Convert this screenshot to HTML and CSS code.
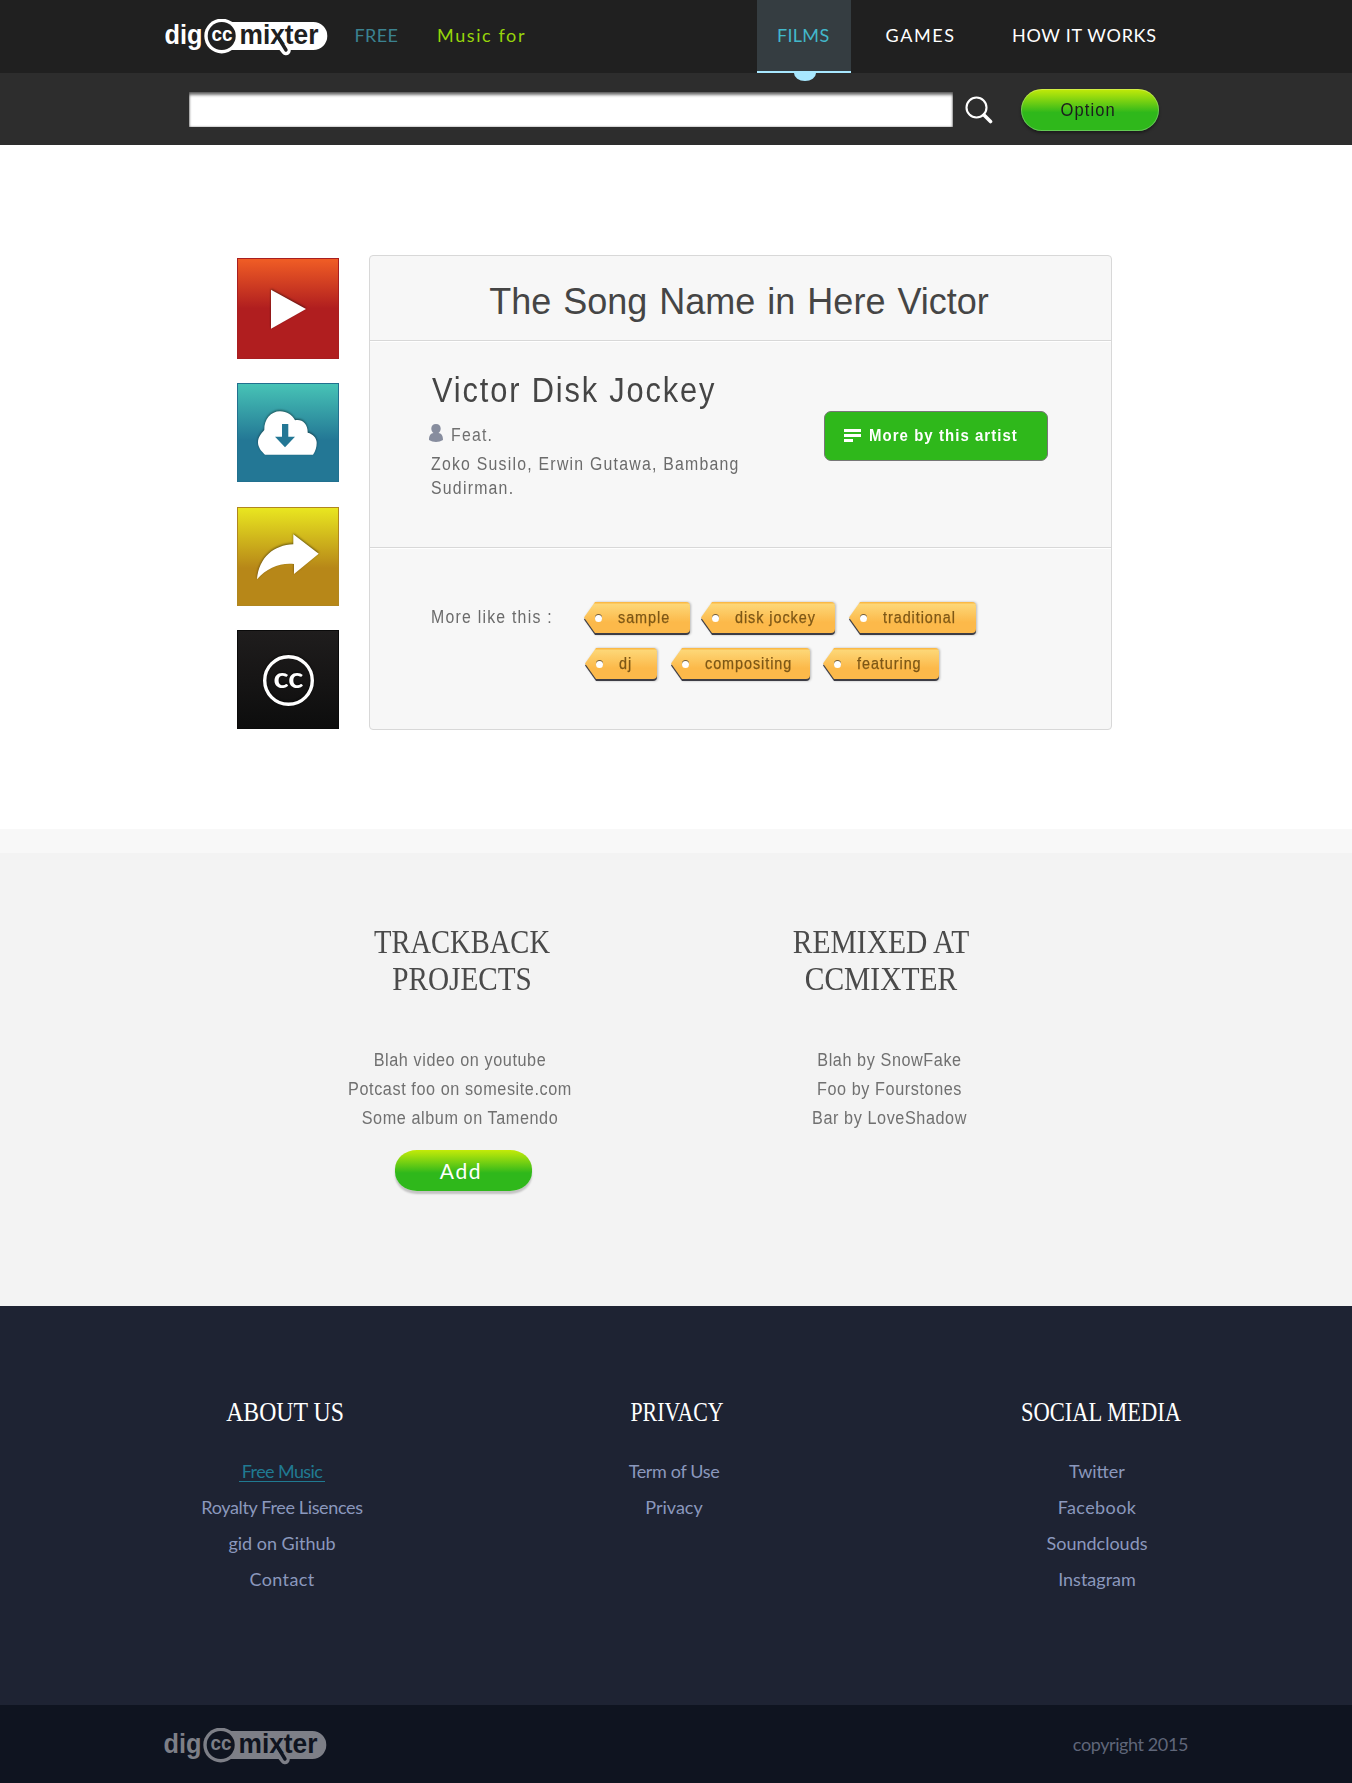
FILE: index.html
```html
<!DOCTYPE html>
<html lang="en">
<head>
<meta charset="utf-8">
<title>dig ccMixter</title>
<link rel="stylesheet" href="styles.css">
</head>
<body>
<header>
  <div class="topbar">
    <svg class="logo" viewBox="0 0 163 37">
      <g id="logo">
        <path class="logo-fg" d="M56 3h92.300a14 14 0 0 1 0 28H56z"/>
        <path d="M115 24l6 7.500" class="logo-tail-bg"/>
        <circle cx="56.700" cy="17" r="17.400" class="logo-fg"/>
        <circle cx="56.700" cy="17" r="14" class="logo-bg"/>
        <text x="-0.500" y="24.700" textLength="38" lengthAdjust="spacingAndGlyphs" class="logo-word logo-fg">dig</text>
        <text x="46.500" y="22.300" textLength="21" lengthAdjust="spacingAndGlyphs" class="logo-cc logo-fg">cc</text>
        <text x="74.500" y="24.700" textLength="79" lengthAdjust="spacingAndGlyphs" class="logo-word logo-bg">mixter</text>
        <path d="M113 18l8 13" class="logo-tail"/>
      </g>
    </svg>
    <a class="nav free">FREE</a>
    <a class="nav music">Music for</a>
    <nav>
      <a class="nav films">FILMS</a>
      <a class="nav games">GAMES</a>
      <a class="nav how">HOW IT WORKS</a>
    </nav>
  </div>
  <div class="searchbar">
    <input class="search" type="text" aria-label="Search">
    <svg class="glass" viewBox="0 0 28 28"><circle cx="11.500" cy="11.500" r="10"/><path d="M19 19l6.500 6.500" /></svg>
    <button class="pill option"><span class="cond">Option</span></button>
  </div>
</header>

<main>
  <div class="actions">
    <a class="tile play"><svg viewBox="0 0 102 101"><path d="M34 30.700v39L69 50z"/></svg></a>
    <a class="tile download"><svg viewBox="0 0 102 99"><path d="M28 70.700C24 67 21 63 21 58.500C21 53 24 50 27.300 46C27 35 34 27.300 43 27.300C50 27.300 55 31 58 36.300C64 34.500 71 39 70.700 48.700C76 50 79.700 54 79.700 58.700C79.700 63 78.500 67 76 70.700z"/><path class="arrow" d="M45 40h6.300v12.700H58L48 63.300L38 52.700h7z"/></svg></a>
    <a class="tile share"><svg viewBox="0 0 102 99"><path d="M20 71.300C22 49 37 37 56.300 36.300v-10L81.700 45.700L57 66V56C43 54.500 30 60 20 71.300z"/></svg></a>
    <a class="tile cc"><svg viewBox="0 0 102 99"><circle cx="51.500" cy="49.500" r="23.800"/><text x="36.500" y="57" textLength="30" lengthAdjust="spacingAndGlyphs">cc</text></svg></a>
  </div>
  <article class="card">
    <h1>The Song Name in Here Victor</h1>
    <section class="artist">
      <div class="who">
        <h2 class="cond">Victor Disk Jockey</h2>
        <p class="feat"><svg viewBox="0 0 14 18"><path d="M7 0c3 0 4.700 2 4.700 4.500c0 2-1 3.500-2.200 4.500c2.500.5 4.500 2 4.500 7C10 18.600 4 18.600 0 16c0-5 2-6.500 4.500-7C3.300 8 2.300 6.500 2.300 4.500C2.300 2 4 0 7 0z"/></svg><span class="cond">Feat.</span></p>
        <p class="cond names">Zoko Susilo, Erwin Gutawa, Bambang<br>Sudirman.</p>
      </div>
      <button class="more"><svg viewBox="0 0 17 13"><path d="M0 0h17v3H0zM0 5h17v3H0zM0 10h9v3H0z"/></svg><span class="cond">More by this artist</span></button>
    </section>
    <section class="similar">
      <p class="cond">More like this :</p>
      <div class="tags">
        <div class="row">
          <a class="tag t-sample"><span><b>sample</b></span></a>
          <a class="tag t-disk"><span><b>disk jockey</b></span></a>
          <a class="tag t-trad"><span><b>traditional</b></span></a>
        </div>
        <div class="row second">
          <a class="tag t-dj"><span><b>dj</b></span></a>
          <a class="tag t-comp"><span><b>compositing</b></span></a>
          <a class="tag t-feat"><span><b>featuring</b></span></a>
        </div>
      </div>
    </section>
  </article>
</main>

<section class="links">
  <div class="col trackback">
    <h3><span class="s1">TRACKBACK</span><span class="s2">PROJECTS</span></h3>
    <ul><li>Blah video on youtube</li><li>Potcast foo on somesite.com</li><li>Some album on Tamendo</li></ul>
    <button class="pill add">Add</button>
  </div>
  <div class="col remixed">
    <h3><span class="s3">REMIXED AT</span><span class="s3">CCMIXTER</span></h3>
    <ul><li>Blah by SnowFake</li><li>Foo by Fourstones</li><li>Bar by LoveShadow</li></ul>
  </div>
</section>

<footer>
  <div class="sitemap">
    <div class="fcol">
      <h4 class="about">ABOUT US</h4>
      <ul><li class="active"><a>Free Music</a></li><li class="tight">Royalty Free Lisences</li><li>gid on Github</li><li class="wide">Contact</li></ul>
    </div>
    <div class="fcol">
      <h4 class="privacy">PRIVACY</h4>
      <ul><li class="tight">Term of Use</li><li>Privacy</li></ul>
    </div>
    <div class="fcol">
      <h4 class="social">SOCIAL MEDIA</h4>
      <ul><li>Twitter</li><li class="wide">Facebook</li><li>Soundclouds</li><li>Instagram</li></ul>
    </div>
  </div>
  <div class="bottom">
    <svg class="logo dim" viewBox="0 0 163 37"><use href="#logo"/></svg>
    <span class="copy">copyright 2015</span>
  </div>
</footer>
</body>
</html>
```
FILE: styles.css
```css
* { box-sizing: border-box; margin: 0; padding: 0; }
body { background: #fff; font: 18px "Liberation Sans", Arial, sans-serif; color: #707070; width: 1352px; }
ul { list-style: none; }
button { border: 0; font: inherit; }

/* Horizontally condensed type */
.cond { display: inline-block; transform: scaleX(.88); transform-origin: 0 50%; letter-spacing: 1.4px; white-space: nowrap; }

/* Logo */
.logo { width: 163px; height: 37px; --fg: #fff; --bg: #202020; }
.logo.dim { --fg: #7d7f87; --bg: #0f1420; }
.logo-fg { fill: var(--fg); }
.logo-bg { fill: var(--bg); }
.logo-word { font: bold 28px "Liberation Sans", Arial, sans-serif; }
.logo-cc { font: bold 20px "Liberation Sans", Arial, sans-serif; }
.logo-tail, .logo-tail-bg { fill: none; stroke-linecap: round; }
.logo-tail { stroke: var(--bg); stroke-width: 3.4; }
.logo-tail-bg { stroke: var(--fg); stroke-width: 9.5; }

/* Header */
.topbar { height: 73px; background: #202020; display: flex; padding-left: 165px; }
.topbar .logo { margin-top: 19px; }
.nav { font: 18px/20px Lato, sans-serif; padding-top: 25px; white-space: nowrap; }
.free { color: #3b8290; margin-left: 26.5px; width: 82.500px; letter-spacing: .4px; }
.music { color: #97d50a; letter-spacing: 1.6px; width: 320px; }
nav { display: flex; color: #fff; }
.films { width: 94px; height: 73px; padding-left: 20px; background: #353d41; border-bottom: 2px solid #a8e8ff; color: #42b8cb; letter-spacing: .3px; position: relative; }
.films::after { content: ""; position: absolute; left: 37px; top: 73px; width: 22px; height: 8px; background: #a8e8ff; border-radius: 0 0 11px 11px / 0 0 8px 8px; }
.games { margin-left: 34.5px; width: 126.500px; letter-spacing: 1.6px; }
.how { letter-spacing: .7px; }

.searchbar { height: 72px; background: #2d2d2d; display: flex; padding-left: 189px; }
.search { margin-top: 19px; width: 764px; height: 35px; border: 0; background: #fff; box-shadow: inset 0 3px 3px rgba(0,0,0,.55), inset 0 0 2px rgba(0,0,0,.6); }
.glass { width: 28px; height: 28px; margin: 23px 28px 0 12px; fill: none; stroke: #fff; stroke-width: 2.1; stroke-linecap: round; }
.glass path { stroke-width: 3.6; }
.pill { background: linear-gradient(#c3ea08 0, #a5e00c 12%, #2fb81b 56%, #2fb81b); text-align: center; }
.option { width: 138px; height: 42px; margin-top: 16px; padding-right: 3px; border-radius: 21px; color: #1c1c1c; box-shadow: 0 2px 3px rgba(0,0,0,.4), inset 0 0 0 1px rgba(255,255,255,.25); line-height: 42px; }
.option .cond { transform: scaleX(.92); transform-origin: 50% 50%; letter-spacing: 1.2px; }

/* Song */
main { display: flex; height: 684px; padding: 110px 0 0 237px; }
.actions { width: 102px; margin: 3px 30px 0 0; }
.tile { display: block; height: 99px; margin-bottom: 25px; border: 1px solid; }
.tile svg { display: block; width: 102px; height: 99px; margin: 0 -1px; overflow: visible; fill: #fff; filter: drop-shadow(0 -1px 1px rgba(0,0,0,.5)); }
.play { height: 101px; margin-bottom: 24px; border-color: #a81e20; background: linear-gradient(#f05d25, #b01e1f 50%); }
.play svg { height: 101px; }
.download { border-color: #22708f; background: linear-gradient(#47c3b6, #237795 58%); }
.download .arrow { fill: #237795; }
.share { margin-bottom: 24px; border-color: #b0861f; background: linear-gradient(#e9e620, #b78718 62%); }
.cc { border-color: #0a0a0a; background: linear-gradient(#1f1d1d, #0d0d0d); }
.cc circle { fill: none; stroke: #fff; stroke-width: 3.4; }
.cc text { font: bold 28px Lato, sans-serif; }

.card { width: 743px; height: 475px; border: 1px solid #d8d8d8; border-radius: 4px; background: #f7f7f7; }
h1 { height: 85px; padding: 26px 3px 0 0; font: 36px/40px "Liberation Sans", Arial, sans-serif; word-spacing: 2px; color: #454545; text-align: center; border-bottom: 1px solid #d8d8d8; }
.artist { height: 207px; display: flex; padding: 28px 63px 0 60px; justify-content: space-between; border-top: 1px solid #fff; border-bottom: 1px solid #d8d8d8; }
.who { width: 330px; }
h2 { font: 35px/40px "Liberation Sans", Arial, sans-serif; color: #454545; }
h2.cond { letter-spacing: 2.1px; margin-left: 2px; display: block; font-weight: normal; }
.feat { display: flex; align-items: center; height: 24px; margin-top: 13px; }
.feat svg { width: 14px; height: 18px; margin: -4px 8px 0 -1px; fill: #878d9e; }
.names { line-height: 24px; margin: 5px 0 0 1px; color: #6b6b6b; }
.more { display: flex; align-items: center; width: 224px; height: 50px; margin-top: 41px; padding-left: 19px; border: 1px solid #777; border-radius: 7px; background: #2fb81b; color: #fff; font-weight: bold; font-size: 17px; }
.more svg { width: 17px; height: 13px; fill: #fff; margin: -2px 8px 0 0; }
.more .cond { letter-spacing: 1.2px; }
.similar { display: flex; padding: 53px 0 0 61px; border-top: 1px solid #fff; color: #6b6b6b; }
.similar p { line-height: 30px; height: 30px; width: 153px; }
.row { display: flex; height: 46px; }
.row.second { padding-left: 1px; }
.tag { display: block; filter: drop-shadow(0 2px .4px #3d3d45) drop-shadow(1px 0 1px rgba(0,0,0,.25)); }
.tag span { display: block; position: relative; height: 31px; padding-left: 34px; line-height: 31px; font-size: 16px; color: #7d5716; border-radius: 0 4px 4px 0; background: linear-gradient(#fbb945 1px, #fdd777 2px, #fcb94a 65%); clip-path: polygon(11px 0, 100% 0, 100% 100%, 11px 100%, 0 50%); }
.tag span::before { content: ""; position: absolute; left: 11px; top: 13px; width: 7px; height: 7px; border-radius: 50%; background: #fff; box-shadow: 0 -1px 0 #6f5b3a; }
.tag b { display: inline-block; white-space: nowrap; font-weight: normal; -webkit-text-stroke: .25px #7d5716; letter-spacing: 1.05px; transform: scaleX(.9); transform-origin: 0 50%; }
.t-sample { width: 106px; margin-right: 11px; }
.t-disk { width: 134px; margin-right: 14px; }
.t-trad { width: 127px; }
.t-dj { width: 72px; margin-right: 14px; }
.t-comp { width: 139px; margin-right: 13px; }
.t-feat { width: 116px; }

/* Trackbacks and remixes */
.links { display: flex; height: 477px; border-top: 24px solid #f8f8f8; background: #f3f3f3; padding: 71px 0 0 312px; }
.col { width: 300px; text-align: center; }
.remixed { margin-left: 119px; }
h3 { font: 33px/37px "Liberation Serif", "Times New Roman", serif; color: #4a4a4a; height: 74px; }
h3 span { display: block; }
.s1 { transform: scaleX(.865); }
.s2 { transform: scaleX(.885); }
.s3 { transform: scaleX(.895); }
.col ul { margin: 48px 4px 0 0; }
.col li { line-height: 29px; letter-spacing: .65px; transform: scaleX(.9); }
.remixed ul { margin: 48px 0 0 17px; }
.add { width: 137px; height: 41px; margin: 17px 0 0 2px; padding-right: 4px; border-radius: 22px / 19px; color: #fff; font: 21px/41px Lato, sans-serif; letter-spacing: 1.6px; box-shadow: 0 3px 2px rgba(0,0,0,.2); }

/* Footer */
.sitemap { display: grid; grid-template-columns: 200px 200px 200px; column-gap: 192px; height: 399px; padding: 90px 0 0 182px; background: #1e2333; text-align: center; font: 18px/36px Lato, sans-serif; color: #8b98bd; }
.fcol:last-child { margin-left: 31px; margin-right: -31px; }
h4 { font: 27px/32px "Liberation Serif", "Times New Roman", serif; color: #fff; white-space: nowrap; }
.fcol ul { margin-top: 25px; }
.about { transform: translateX(3px) scaleX(.88); }
.privacy { transform: translateX(3px) scaleX(.81); }
.social { transform: translateX(4px) scaleX(.835); }
.tight { letter-spacing: -.35px; }
.wide { letter-spacing: .4px; }
.active { color: #207a92; letter-spacing: -.6px; }
.active a { display: inline-block; line-height: 20px; padding: 0 3px; border-bottom: 1px solid #207a92; }
.bottom { display: flex; justify-content: space-between; height: 78px; padding: 23px 164px 0 164px; background: #0f1420; }
.copy { font: 18px/20px Lato, sans-serif; letter-spacing: -.4px; color: #5f6679; margin-top: 6px; }
```
